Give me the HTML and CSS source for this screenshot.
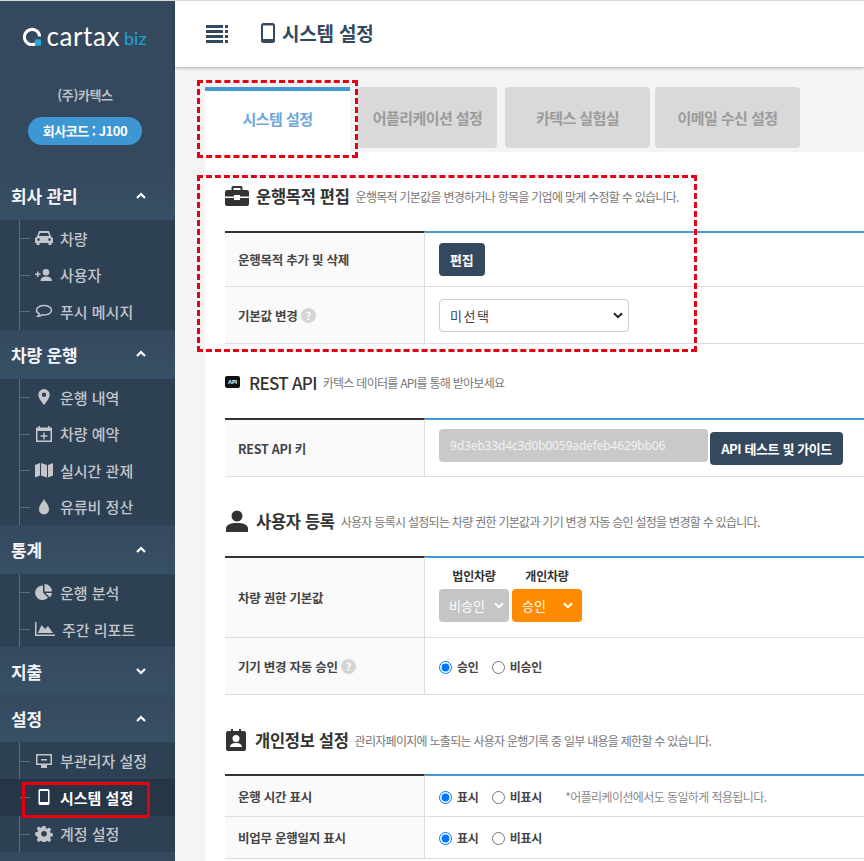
FILE: index.html
```html
<!DOCTYPE html>
<html lang="ko">
<head>
<meta charset="utf-8">
<title>시스템 설정</title>
<link rel="stylesheet" href="styles.css">
</head>
<body>
<div class="app">
  <aside class="sidebar">
    <div class="logo">
      <svg class="logo-mark" width="19" height="19" viewBox="0 0 20 20"><path d="M14.500 16.800A8 8 0 1 1 17.500 10" fill="none" stroke="#fff" stroke-width="3.200"/><rect x="12.500" y="13" width="6.500" height="6.500" fill="#2aa8e0"/></svg>
      <span class="logo-name">cartax</span><span class="logo-biz">biz</span>
    </div>
    <div class="company">(주)카텍스</div>
    <div class="code-pill">회사코드 : J100</div>

    <div class="nav-head nav-head-first"><span>회사 관리</span><svg class="chev" viewBox="0 0 12 8"><path d="M2 6l4-4 4 4" fill="none" stroke="#fff" stroke-width="2.200"/></svg></div>
    <ul class="nav-list">
      <li><svg class="ico" viewBox="0 0 18 16"><path fill="currentColor" d="M4 1h10l2 5.500c1 .5 2 1.200 2 2.500v4h-1.500v2h-3v-2h-9v2h-3v-2H0V9c0-1.300 1-2 2-2.500zM5 3L3.800 6h10.400L13 3zM3.500 8.300a1.300 1.300 0 1 0 0 2.600 1.300 1.300 0 0 0 0-2.600zm11 0a1.300 1.300 0 1 0 0 2.600 1.300 1.300 0 0 0 0-2.600z" fill-rule="evenodd"/></svg>차량</li>
      <li><svg class="ico" viewBox="0 0 18 16"><path fill="currentColor" d="M11 2a3.300 3.300 0 1 1 0 6.600A3.300 3.300 0 0 1 11 2zM5.500 14c0-3 2-4.500 5.500-4.500s6 1.500 6 4.500zM0 6.500h2v-2h1.500v2h2V8h-2v2H2V8H0z"/></svg>사용자</li>
      <li><svg class="ico" viewBox="0 0 18 16"><path fill="none" stroke="currentColor" stroke-width="1.500" d="M9 2.500c4 0 7.500 2 7.500 4.800S13 12 9 12c-.8 0-1.500 0-2.200-.2-1 .8-2.300 1.500-4 1.500.8-.8 1.300-1.700 1.400-2.500C2.500 10 1.500 8.800 1.500 7.300 1.500 4.500 5 2.500 9 2.500z"/></svg>푸시 메시지</li>
    </ul>

    <div class="nav-head"><span>차량 운행</span><svg class="chev" viewBox="0 0 12 8"><path d="M2 6l4-4 4 4" fill="none" stroke="#fff" stroke-width="2.200"/></svg></div>
    <ul class="nav-list">
      <li><svg class="ico" viewBox="0 0 18 16"><path fill="currentColor" fill-rule="evenodd" d="M9 0a5.700 5.700 0 0 1 5.700 5.700C14.700 9.500 9 16 9 16S3.300 9.500 3.300 5.700A5.700 5.700 0 0 1 9 0zm0 3.500a2.200 2.200 0 1 0 0 4.400 2.200 2.200 0 0 0 0-4.400z"/></svg>운행 내역</li>
      <li><svg class="ico" viewBox="0 0 18 16"><path fill="currentColor" fill-rule="evenodd" d="M3.500 0H5v1.500h8V0h1.500v1.500H17V16H1V1.500h2.500zM2.500 5v9.500h13V5zM8.300 6.500h1.400v2.800h2.700v1.400H9.700v2.800H8.300v-2.800H5.600V9.300h2.700z"/></svg>차량 예약</li>
      <li><svg class="ico" viewBox="0 0 18 16"><path fill="currentColor" d="M0 3l5-2v12.500l-5 2zM6 1l6 2v12.500l-6-2zM13 3l5-2v12.500l-5 2z"/></svg>실시간 관제</li>
      <li><svg class="ico" viewBox="0 0 18 16"><path fill="currentColor" d="M9 0c1 3 5 5.500 5 10.500a5 5 0 0 1-10 0C4 5.500 8 3 9 0z"/></svg>유류비 정산</li>
    </ul>

    <div class="nav-head"><span>통계</span><svg class="chev" viewBox="0 0 12 8"><path d="M2 6l4-4 4 4" fill="none" stroke="#fff" stroke-width="2.200"/></svg></div>
    <ul class="nav-list">
      <li><svg class="ico" viewBox="0 0 18 16"><path fill="currentColor" d="M8 1.500v7l5 5A7.300 7.300 0 1 1 8 1.500zM9.500 0A7.500 7.500 0 0 1 17 7.500H9.500zM10.500 9H17a7 7 0 0 1-2 4.500z"/></svg>운행 분석</li>
      <li class="nav-wide"><svg class="ico ico-wide" viewBox="0 0 20 16"><path fill="currentColor" d="M0 1h1.500v12.500H20V15H0zM3 12l3.500-8 3.500 4 3-3 5 7z"/></svg>주간 리포트</li>
    </ul>

    <div class="nav-head nav-head-short"><span>지출</span><svg class="chev" viewBox="0 0 12 8"><path d="M2 2l4 4 4-4" fill="none" stroke="#fff" stroke-width="2.200"/></svg></div>
    <div class="nav-head nav-head-short"><span>설정</span><svg class="chev" viewBox="0 0 12 8"><path d="M2 6l4-4 4 4" fill="none" stroke="#fff" stroke-width="2.200"/></svg></div>
    <ul class="nav-list">
      <li><svg class="ico" viewBox="0 0 18 16"><path fill="currentColor" fill-rule="evenodd" d="M1 1h16v11h-5v3H6v-3H1zM2.500 2.500v8h13v-8zM6 6h6v1.500H6z"/></svg>부관리자 설정</li>
      <li class="nav-active"><svg class="ico" viewBox="0 0 18 16"><path fill="currentColor" fill-rule="evenodd" d="M5 0h8a1.500 1.500 0 0 1 1.500 1.500v13A1.500 1.500 0 0 1 13 16H5a1.500 1.500 0 0 1-1.500-1.500v-13A1.500 1.500 0 0 1 5 0zm0 2v11h8V2z"/></svg>시스템 설정</li>
      <li><svg class="ico" viewBox="0 0 18 16"><path fill="currentColor" fill-rule="evenodd" d="M7.500 0h3l.4 2.200 1.400.6 1.900-1.300 2.100 2.100-1.300 1.900.6 1.400 2.200.4v3l-2.200.4-.6 1.400 1.300 1.900-2.100 2.100-1.900-1.300-1.400.4-.4 1.800h-3l-.4-1.800-1.400-.4-1.900 1.300L1.700 14l1.300-1.900-.6-1.400L.2 9.300v-3l2.200-.4.6-1.400L1.700 2.600 3.800.5l1.900 1.300 1.400-.6zM9 5a2.800 2.800 0 1 0 0 5.600A2.800 2.800 0 0 0 9 5z"/></svg>계정 설정</li>
    </ul>
  </aside>

  <div class="main">
    <header class="topbar">
      <svg class="menu-ico" width="23" height="19" viewBox="0 0 23 19"><path fill="#34495e" d="M0 1h17v3H0zM0 6h17v3H0zM0 11h17v3H0zM0 16h17v3H0zM19 1h3v3h-3zM19 6h3v3h-3zM19 11h3v3h-3zM19 16h3v3h-3z"/></svg>
      <svg class="phone-ico" width="14" height="20" viewBox="0 0 14 20"><path fill="#34495e" fill-rule="evenodd" d="M2.500 0h9A2.500 2.500 0 0 1 14 2.500v15a2.500 2.500 0 0 1-2.500 2.500h-9A2.500 2.500 0 0 1 0 17.500v-15A2.500 2.500 0 0 1 2.500 0zM2 2.500V16h10V2.500z"/></svg>
      <h1 class="page-title">시스템 설정</h1>
    </header>

    <div class="content">
      <nav class="tabs">
        <div class="tab tab-active">시스템 설정</div>
        <div class="tab tab-1">어플리케이션 설정</div>
        <div class="tab tab-2">카텍스 실험실</div>
        <div class="tab tab-3">이메일 수신 설정</div>
      </nav>

      <div class="panel">
        <section class="sec sec-purpose">
          <div class="sec-title">
            <svg class="sec-ico" width="24" height="20" viewBox="0 0 24 20"><path fill="#333" fill-rule="evenodd" d="M8 0h8a1.500 1.500 0 0 1 1.500 1.500V4H22a2 2 0 0 1 2 2v4.500H15V9H9v1.500H0V6a2 2 0 0 1 2-2h4.500V1.500A1.500 1.500 0 0 1 8 0zm.5 2v2h7V2zM0 12h9v2h6v-2h9v6a2 2 0 0 1-2 2H2a2 2 0 0 1-2-2z"/></svg>
            <h2>운행목적 편집</h2><p>운행목적 기본값을 변경하거나 항목을 기업에 맞게 수정할 수 있습니다.</p>
          </div>
          <div class="tbl">
            <div class="row row-56"><div class="th">운행목적 추가 및 삭제</div><div class="td"><button class="btn">편집</button></div></div>
            <div class="row row-57"><div class="th">기본값 변경 <span class="help">?</span></div><div class="td"><select class="sel sel-main"><option>미선택</option></select></div></div>
          </div>
        </section>

        <section class="sec sec-api">
          <div class="sec-title sec-title-api">
            <svg class="sec-ico-api" width="15" height="12" viewBox="0 0 15 12"><rect width="15" height="12" rx="2" fill="#111"/><text x="7.500" y="8.300" text-anchor="middle" font-family="Liberation Sans" font-size="5.500" font-weight="700" fill="#fff">API</text></svg>
            <h2 class="api-h">REST API</h2><p>카텍스 데이터를 API를 통해 받아보세요</p>
          </div>
          <div class="tbl">
            <div class="row row-59"><div class="th">REST API 키</div><div class="td td-api"><input class="key" value="9d3eb33d4c3d0b0059adefeb4629bb06" readonly><button class="btn btn-api">API 테스트 및 가이드</button></div></div>
          </div>
        </section>

        <section class="sec sec-user">
          <div class="sec-title">
            <svg class="sec-ico" width="24" height="22" viewBox="0 0 24 22"><circle cx="12" cy="6" r="5.500" fill="#333"/><path fill="#333" d="M1 22v-3.500C1 15 5 13 12 13s11 2 11 5.500V22z"/></svg>
            <h2>사용자 등록</h2><p>사용자 등록시 설정되는 차량 권한 기본값과 기기 변경 자동 승인 설정을 변경할 수 있습니다.</p>
          </div>
          <div class="tbl">
            <div class="row row-82"><div class="th">차량 권한 기본값</div>
              <div class="td td-perm">
                <div class="perm"><span class="perm-label">법인차량</span><select class="sel sel-grey"><option>비승인</option></select></div>
                <div class="perm"><span class="perm-label">개인차량</span><select class="sel sel-orange"><option>승인</option></select></div>
              </div>
            </div>
            <div class="row row-57"><div class="th">기기 변경 자동 승인 <span class="help">?</span></div>
              <div class="td"><label class="radio"><input type="radio" name="a" checked>승인</label><label class="radio"><input type="radio" name="a">비승인</label></div>
            </div>
          </div>
        </section>

        <section class="sec sec-privacy">
          <div class="sec-title">
            <svg class="sec-ico sec-ico-cal" width="20" height="22" viewBox="0 0 20 22"><path fill="#333" fill-rule="evenodd" d="M2 2h3V0h2v2h6V0h2v2h3a2 2 0 0 1 2 2v16a2 2 0 0 1-2 2H2a2 2 0 0 1-2-2V4a2 2 0 0 1 2-2zm8 4a3.500 3.500 0 1 0 0 7 3.500 3.500 0 0 0 0-7zM4 18h12c0-2.500-2.500-4-6-4s-6 1.500-6 4z"/></svg>
            <h2>개인정보 설정</h2><p>관리자페이지에 노출되는 사용자 운행기록 중 일부 내용을 제한할 수 있습니다.</p>
          </div>
          <div class="tbl">
            <div class="row row-43"><div class="th">운행 시간 표시</div>
              <div class="td"><label class="radio"><input type="radio" name="b" checked>표시</label><label class="radio"><input type="radio" name="b">비표시</label><span class="note">*어플리케이션에서도 동일하게 적용됩니다.</span></div>
            </div>
            <div class="row row-42"><div class="th">비업무 운행일지 표시</div>
              <div class="td"><label class="radio"><input type="radio" name="c" checked>표시</label><label class="radio"><input type="radio" name="c">비표시</label></div>
            </div>
          </div>
        </section>
      </div>

      <div class="mark mark-tab"></div>
      <div class="mark mark-sec"></div>
    </div>
  </div>
  <div class="mark-nav"></div>
</div>
</body>
</html>
```

FILE: styles.css
```css
* { box-sizing: border-box; }
html, body { margin: 0; padding: 0; }
body {
  font-family: "Noto Sans CJK KR", "Noto Sans", sans-serif;
  color: #333;
  overflow: hidden;
}
ul, h1, h2, p { margin: 0; padding: 0; }
.app {
  position: relative;
  display: flex;
  width: 864px;
  height: 861px;
  overflow: hidden;
  border-top: 1px solid #d5d9de;
}

/* sidebar */
.sidebar {
  flex: 0 0 175px;
  background: #34495e;
  color: #fff;
  display: flex;
  flex-direction: column;
}
.logo {
  display: flex;
  align-items: center;
  justify-content: center;
  height: 72px;
  padding: 0 5px 2px 0;
}
.logo-mark { margin-right: 4px; }
.logo-name { font-family: "Lato", sans-serif; font-size: 26px; font-weight: 400; line-height: 30px; letter-spacing: .6px; }
.logo-biz { font-family: "Lato", sans-serif; font-size: 18px; color: #1fa5dc; margin-left: 4px; line-height: 30px; padding-top: 3px; }
.company {
  text-align: center;
  font-size: 13px;
  font-weight: 700;
  color: #b9bec4;
  line-height: 20px;
  margin-top: 12px;
  padding-right: 5px;
  letter-spacing: -.4px;
}
.code-pill {
  align-self: flex-start;
  width: 114px;
  height: 28px;
  margin: 12px 0 0 28px;
  border-radius: 14px;
  background: #3d97d3;
  text-align: center;
  font-size: 13px;
  font-weight: 700;
  line-height: 27px;
  letter-spacing: -.5px;
}
.nav-head {
  height: 49px;
  flex: none;
  display: flex;
  align-items: center;
  justify-content: space-between;
  padding: 0 28px 0 11px;
  font-size: 17px;
  font-weight: 700;
  letter-spacing: -.2px;
  background: linear-gradient(#34495e, #385067);
  color: #f4f6f7;
}
.nav-head-first { margin-top: 26px; }
.nav-head-short { height: 47.500px; }
.chev { width: 12px; height: 8px; }
.nav-list {
  list-style: none;
  background: #2e4053;
  position: relative;
  flex: none;
}
.nav-list::before {
  content: "";
  position: absolute;
  left: 19px;
  top: 0;
  bottom: 0;
  width: 1px;
  background: #5d6d7e;
}
.nav-list li {
  position: relative;
  height: 36.600px;
  display: flex;
  align-items: center;
  padding-left: 35px;
  font-size: 15px;
  font-weight: 500;
  color: #c3c7cb;
}
.nav-list li::before {
  content: "";
  position: absolute;
  left: 20px;
  top: 50%;
  width: 10px;
  height: 1px;
  background: #5d6d7e;
}
.ico { width: 18px; height: 16px; margin-right: 7px; flex: none; }
.ico-wide { width: 20px; margin-right: 7px; }
.nav-list .nav-active { background: #263646; color: #fff; font-weight: 700; }

/* main */
.main { flex: 1; min-width: 0; background: #f4f4f4; display: flex; flex-direction: column; }
.topbar {
  height: 66px;
  flex: none;
  background: #fff;
  display: flex;
  align-items: center;
  padding: 0 0 2px 31px;
  box-shadow: 0 1px 3px rgba(0,0,0,.3);
  position: relative;
}
.phone-ico { margin-left: 32px; margin-right: 7px; }
.page-title { font-size: 19px; font-weight: 700; color: #34495e; letter-spacing: -.2px; line-height: 28px; }
.content { position: relative; flex: 1; padding: 20px 0 0 30px; }
.tabs { display: flex; align-items: flex-start; height: 65px; }
.tab {
  height: 61px;
  background: #d9d9d9;
  border-radius: 4px;
  display: flex;
  align-items: center;
  justify-content: center;
  padding-bottom: 1px;
  font-size: 15px;
  font-weight: 700;
  color: #9b9b9b;
  letter-spacing: -.55px;
}
.tab-active {
  width: 145px;
  height: 65px;
  background: #fff;
  border-radius: 0;
  border-top: 4px solid #3f9bd2;
  color: #6ea6dc;
  padding-bottom: 7px;
}
.tab-1 { width: 139px; margin-left: 8px; }
.tab-2 { width: 145px; margin-left: 8px; }
.tab-3 { width: 145px; margin-left: 5px; }

.panel { background: #fff; padding: 0 0 0 20px; height: 720px; }
.sec-title { display: flex; align-items: center; height: 28px; }
.sec-ico { flex: none; margin-right: 7px; }
.sec-title h2 { font-size: 16.500px; font-weight: 700; color: #333; letter-spacing: -.3px; white-space: nowrap; }
.sec-title p { font-size: 12px; font-weight: 400; color: #777; margin-left: 6px; letter-spacing: -.72px; white-space: nowrap; }
.sec-purpose { padding-top: 30px; }
.sec-api { padding-top: 24px; }
.sec-user { padding-top: 30px; }
.sec-privacy { padding-top: 31px; }
.sec-ico-api { flex: none; margin-right: 9px; }
.sec-ico-cal { margin-left: 1px; margin-right: 9px; }
.sec-title .api-h { font-size: 17px; font-weight: 500; letter-spacing: -.7px; }

.tbl { margin-top: 21px; }
.sec-api .tbl { margin-top: 22px; }
.sec-privacy .tbl { margin-top: 20px; }
.row { display: flex; border-bottom: 1px solid #ddd; }
.row:first-child .th { border-top: 2px solid #333; }
.row:first-child .td { border-top: 2px solid #3f9bd2; }
.th {
  flex: 0 0 200px;
  background: #fafafa;
  border-right: 1px solid #ddd;
  display: flex;
  align-items: center;
  padding-left: 13px;
  font-size: 12.500px;
  font-weight: 700;
  color: #444;
  letter-spacing: -.25px;
  white-space: pre;
}
.td { flex: 1; display: flex; align-items: center; padding-left: 14px; font-size: 12.500px; }
.row-56 { height: 56px; }
.row-57 { height: 57px; }
.row-59 { height: 59px; }
.row-82 { height: 82px; }
.row-43 { height: 43px; }
.row-42 { height: 42px; }
.help {
  width: 15px;
  height: 15px;
  border-radius: 50%;
  background: #d5d5d5;
  color: #fff;
  font-size: 11px;
  font-weight: 700;
  line-height: 15px;
  text-align: center;
  letter-spacing: 0;
}
.btn {
  height: 33px;
  border: 0;
  border-radius: 4px;
  background: #34495e;
  color: #fff;
  font: 700 13px "Noto Sans CJK KR", sans-serif;
  padding: 0 11px;
  letter-spacing: -.2px;
}
.sel {
  height: 33px;
  border-radius: 4px;
  font: 400 13px "Noto Sans CJK KR", sans-serif;
  appearance: none;
  background-repeat: no-repeat;
  background-position: right 9px center;
  background-size: 10px 7px;
  background-image: url("data:image/svg+xml,%3Csvg xmlns='http://www.w3.org/2000/svg' viewBox='0 0 10 7'%3E%3Cpath d='M1 1.200l4 4 4-4' fill='none' stroke='%23fff' stroke-width='2'/%3E%3C/svg%3E");
}
.sel-main {
  width: 190px;
  border: 1px solid #ccc;
  background-color: #fff;
  color: #444;
  padding-left: 10px;
  letter-spacing: 1.500px;
  background-image: url("data:image/svg+xml,%3Csvg xmlns='http://www.w3.org/2000/svg' viewBox='0 0 10 7'%3E%3Cpath d='M1 1.200l4 4 4-4' fill='none' stroke='%23222' stroke-width='2'/%3E%3C/svg%3E");
  background-position: right 5px center;
}
.sel-grey { width: 70px; border: 0; background-color: #c5c5c5; color: #fff; padding-left: 10px; background-position: right 5px center; }
.sel-orange { width: 70px; border: 0; background-color: #ff8c00; color: #fff; padding-left: 10px; }
.td-api { gap: 2px; align-items: flex-start; padding-top: 9px; }
.key {
  width: 269px;
  height: 33px;
  border: 0;
  border-radius: 4px;
  background: #c9c9c9;
  color: #f3f3f3;
  font: 400 12px "Noto Sans", sans-serif;
  padding: 0 11px;
  outline: none;
  letter-spacing: -.15px;
}
.btn-api { margin-top: 3px; width: 133px; padding: 0; letter-spacing: -.4px; }
.td-perm { gap: 3px; align-items: flex-end; padding-bottom: 15px; }
.perm { display: flex; flex-direction: column; align-items: center; }
.perm-label { font-size: 12px; font-weight: 700; color: #333; margin-bottom: 4px; line-height: 18px; letter-spacing: -.2px; }
.radio { display: inline-flex; align-items: center; font-weight: 700; color: #444; font-size: 12px; margin-right: 13px; letter-spacing: -.2px; }
.radio input { margin: 0 5px 0 0; width: 13px; height: 13px; position: relative; top: 1px; }
.note { font-size: 12px; color: #888; margin-left: 10px; letter-spacing: -.6px; }

/* annotation overlays */
.mark { position: absolute; border: 3px dashed #e60012; pointer-events: none; }
.mark-tab { left: 22px; top: 13px; width: 161px; height: 78px; }
.mark-sec { left: 22px; top: 108px; width: 500px; height: 177px; }
.mark-nav {
  position: absolute;
  left: 22px;
  top: 781px;
  width: 128px;
  height: 36px;
  border: 3px solid #e60012;
  pointer-events: none;
}
```
